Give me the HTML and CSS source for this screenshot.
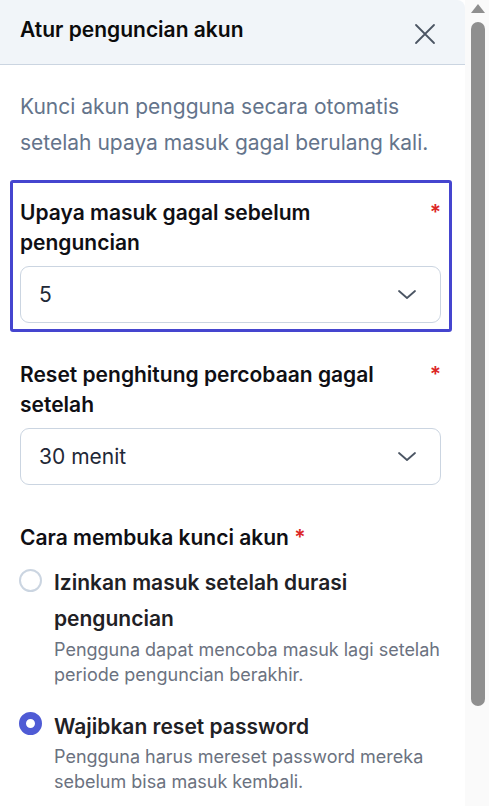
FILE: index.html
```html
<!DOCTYPE html>
<html lang="id">
<head>
<meta charset="utf-8">
<title>Atur penguncian akun</title>
<link rel="stylesheet" href="styles.css">
</head>
<body>
<div class="panel">
  <header class="panel-header">
    <h2 class="panel-title">Atur penguncian akun</h2>
    <button class="close-btn" aria-label="Tutup">
      <svg width="24" height="24" viewBox="0 0 24 24" fill="none" stroke="#4b5563" stroke-width="1.8" stroke-linecap="round"><path d="M3 3L21 21M21 3L3 21"/></svg>
    </button>
  </header>
  <div class="panel-body">
    <p class="intro">Kunci akun pengguna secara otomatis setelah upaya masuk gagal berulang kali.</p>

    <div class="field field-focus">
      <div class="field-label">
        <span>Upaya masuk gagal sebelum penguncian</span>
        <span class="req">*</span>
      </div>
      <div class="select">
        <span class="select-value">5</span>
        <svg class="chev" width="20" height="11" viewBox="0 0 20 11" fill="none" stroke="#4b5563" stroke-width="1.8" stroke-linecap="round" stroke-linejoin="round"><path d="M2 2L10 9L18 2"/></svg>
      </div>
    </div>

    <div class="field">
      <div class="field-label">
        <span>Reset penghitung percobaan gagal setelah</span>
        <span class="req">*</span>
      </div>
      <div class="select">
        <span class="select-value">30 menit</span>
        <svg class="chev" width="20" height="11" viewBox="0 0 20 11" fill="none" stroke="#4b5563" stroke-width="1.8" stroke-linecap="round" stroke-linejoin="round"><path d="M2 2L10 9L18 2"/></svg>
      </div>
    </div>

    <div class="group">
      <div class="group-label">Cara membuka kunci akun <span class="req">*</span></div>
      <div class="radio-row">
        <span class="radio"></span>
        <div class="radio-text">
          <div class="radio-title">Izinkan masuk setelah durasi penguncian</div>
          <div class="radio-desc">Pengguna dapat mencoba masuk lagi setelah periode penguncian berakhir.</div>
        </div>
      </div>
      <div class="radio-row">
        <span class="radio radio-on"></span>
        <div class="radio-text">
          <div class="radio-title">Wajibkan reset password</div>
          <div class="radio-desc">Pengguna harus mereset password mereka sebelum bisa masuk kembali.</div>
        </div>
      </div>
    </div>
  </div>
</div>
<div class="scrollbar" aria-hidden="true">
  <span class="scroll-arrow"></span>
  <span class="scroll-thumb"></span>
</div>
</body>
</html>
```
FILE: styles.css
```css
html, body {
  margin: 0;
  padding: 0;
}
body {
  background: #fafafa;
  font-family: Inter, "Noto Sans", sans-serif;
  color: #111827;
}
.panel {
  width: 465px;
  background: #ffffff;
  padding-bottom: 120px;
}
.panel-header {
  height: 64px;
  background: #f1f5f9;
  border-bottom: 1px solid #cbd5e1;
  border-top-right-radius: 8px;
  display: flex;
  align-items: flex-start;
  justify-content: space-between;
  padding: 0 28px 0 20px;
}
.panel-title {
  margin: 15px 0 0;
  font-size: 21px;
  line-height: 30px;
  font-weight: 600;
  color: #0b0b0b;
}
.close-btn {
  margin-top: 22px;
  padding: 0;
  border: 0;
  background: none;
  width: 24px;
  height: 24px;
  display: flex;
}
.panel-body {
  padding: 24px 24px 0 20px;
}
.intro {
  margin: 0;
  font-size: 21px;
  line-height: 36px;
  color: #64748b;
}
.field {
  margin-top: 28px;
}
.field-focus {
  margin: 19px -11px 0 -10px;
  border: 3px solid #4545cf;
  border-radius: 3px;
  padding: 15px 8px 6px 7px;
}
.field-label {
  display: flex;
  justify-content: space-between;
  align-items: flex-start;
  font-size: 21px;
  line-height: 30px;
  font-weight: 600;
  color: #0f0f14;
}
.field-label > span:first-child {
  max-width: 380px;
}
.req {
  color: #dc2626;
  font-weight: 600;
}
.select {
  margin-top: 8px;
  height: 57px;
  box-sizing: border-box;
  border: 1px solid #cbd5e1;
  border-radius: 9px;
  display: flex;
  align-items: center;
  justify-content: space-between;
  padding: 0 23px 0 18px;
  font-size: 21px;
  color: #1f2937;
}
.group {
  margin-top: 38px;
}
.group-label {
  font-size: 21px;
  line-height: 30px;
  font-weight: 600;
  color: #0f0f14;
}
.radio-row {
  display: flex;
  gap: 12px;
  margin-top: 12px;
}
.radio-row + .radio-row {
  margin-top: 22px;
}
.radio {
  flex: none;
  width: 23px;
  height: 23px;
  box-sizing: border-box;
  border: 2px solid #cbd5e1;
  border-radius: 50%;
  margin-top: 4px;
  margin-left: -1px;
  background: #fff;
}
.radio-on {
  border: 7px solid #4f5bd5;
  margin-top: 3px;
}
.radio-text {
  flex: 1;
}
.radio-title {
  font-size: 21px;
  line-height: 36px;
  font-weight: 600;
  color: #1f2125;
}
.radio-desc {
  font-size: 18px;
  line-height: 25px;
  color: #6b7280;
  margin-top: -0.5px;
}
.scrollbar {
  position: fixed;
  top: 0;
  right: 0;
  width: 24px;
  height: 100%;
  background: #fafafa;
}
.scroll-arrow {
  position: absolute;
  top: 4px;
  left: 6px;
  width: 0;
  height: 0;
  border-left: 7px solid transparent;
  border-right: 7px solid transparent;
  border-bottom: 9px solid #8f8f8f;
}
.scroll-thumb {
  position: absolute;
  top: 22px;
  left: 6px;
  width: 14px;
  height: 684px;
  border-radius: 7px;
  background: #8f8f8f;
}
```
